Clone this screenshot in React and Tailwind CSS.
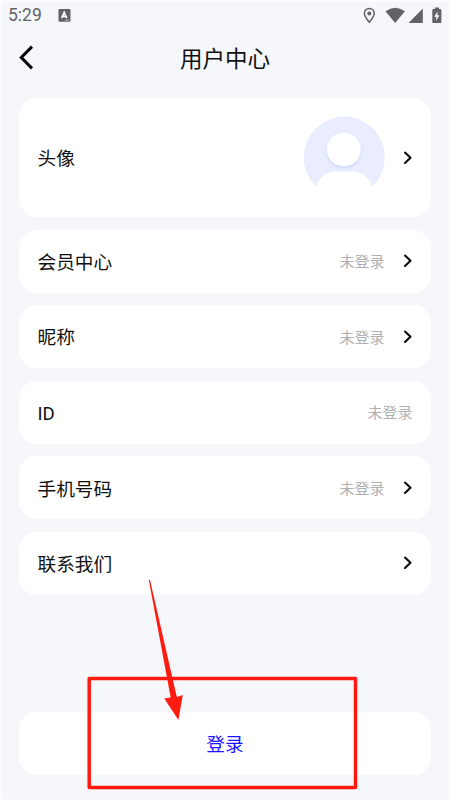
function Chevron() {
  return (
    <svg className="ml-[18px] h-[14px] w-[10px] shrink-0" viewBox="0 0 10 14" fill="none" stroke="#090909" strokeWidth="2.1" strokeLinecap="round" strokeLinejoin="round">
      <path d="M2 1.6 L7.5 6.8 L2 12" />
    </svg>
  );
}

function Avatar() {
  return (
    <svg className="-mt-[2px] h-[82px] w-[82px]" viewBox="0 0 82 82">
      <defs>
        <filter id="headShadow" x="-30%" y="-30%" width="160%" height="160%">
          <feDropShadow dx="0" dy="1.5" stdDeviation="1.6" floodColor="#c3cbfa" floodOpacity="0.8" />
        </filter>
      </defs>
      <circle cx="41.3" cy="41.2" r="40.6" fill="#e9edff" />
      <path d="M10 82 L13 71 C15 62 23 55.5 33 55.5 H49 C59 55.5 67 62 69 71 L72 82 Z" fill="#fff" />
      <circle cx="40.8" cy="33.4" r="17" fill="#fff" filter="url(#headShadow)" />
    </svg>
  );
}

function Row({ label, value, arrow = true }) {
  return (
    <div className="flex h-[63px] shrink-0 items-center rounded-[18px] bg-white pr-[18.5px] pl-[18.5px]">
      <span className="flex-1 pt-[4px] text-[18.67px] leading-none text-[#111]">{label}</span>
      {value && <span className="pt-[3px] text-[15px] leading-none text-[#b0b0b0]">{value}</span>}
      {arrow && <Chevron />}
    </div>
  );
}

function StatusBar() {
  return (
    <div className="flex h-[27px] items-center text-[#626366]">
      <span className="ml-[6px] w-[50px] pt-px text-[17.5px] leading-none">5:29</span>
      <svg className="h-[13px] w-[13px]" viewBox="0 0 13 13">
        <rect x="0.5" y="0" width="12" height="12.8" rx="1.2" fill="currentColor" />
        <path d="M3.6 9.2 L6.2 3.2 L8.8 9.2 M4.6 7.4 H7.8" fill="none" stroke="#fff" strokeWidth="1.6" />
        <path d="M7 11.2 H11" stroke="#c4c4c6" strokeWidth="0.8" />
      </svg>
      <div className="flex-1" />
      <svg className="h-[20px] w-[86px]" viewBox="362 5.5 86 20" fill="currentColor">
        <path d="M369.3 7.9 a4.9 4.9 0 0 1 4.9 4.9 C374.2 16 369.3 21.8 369.3 21.8 S364.4 16 364.4 12.8 A4.9 4.9 0 0 1 369.3 7.9 Z" fill="none" stroke="currentColor" strokeWidth="1.5" />
        <circle cx="369.3" cy="12.9" r="2" />
        <path d="M385.5 10.7 Q395.2 3.7 404.9 10.7 L395.2 22.5 Z" />
        <path d="M422.8 8 V22.4 H408.5 Z" />
        <path d="M434.8 7 H439 V8.5 H440.2 Q441.4 8.5 441.4 9.7 V21.4 Q441.4 22.6 440.2 22.6 H433.5 Q432.3 22.6 432.3 21.4 V9.7 Q432.3 8.5 433.5 8.5 H434.8 Z" />
        <path d="M437.8 10.7 L434.2 16.2 H436.4 L435.9 20.5 L439.4 14.7 H437.2 Z" fill="#fff" />
      </svg>
    </div>
  );
}

export default function App() {
  return (
    <div className="relative flex h-[800px] w-[450px] flex-col overflow-hidden border-x-2 border-t-2 border-b border-[#fbfcfe] bg-[#f5f7fb] font-['Roboto','Noto_Sans_CJK_SC',sans-serif]">
      <StatusBar />
      <header className="flex h-[67px] shrink-0 items-start">
        <svg className="mt-[14px] ml-[15px] h-[28px] w-[20px]" viewBox="0 0 20 28" fill="none" stroke="#050505" strokeWidth="3" strokeLinecap="butt">
          <path d="M15 3.6 L4.3 14.5 L15 25.4" />
        </svg>
        <h1 className="mt-[19px] ml-[143px] text-[22.5px] leading-none text-[#111]">用户中心</h1>
      </header>
      <main className="mt-[2px] flex flex-col gap-[12.6px] pr-[17px] pl-[17px]">
        <div className="flex h-[119px] shrink-0 items-center rounded-[18px] bg-white px-[18.5px]">
          <span className="flex-1 pt-[3px] text-[18.67px] leading-none text-[#111]">头像</span>
          <Avatar />
          <Chevron />
        </div>
        <Row label="会员中心" value="未登录" />
        <Row label="昵称" value="未登录" />
        <Row label="ID" value="未登录" arrow={false} />
        <Row label="手机号码" value="未登录" />
        <Row label="联系我们" />
      </main>
      <button className="mx-[17px] mt-auto mb-[24px] h-[63px] shrink-0 rounded-[18px] bg-white pt-[3px] text-[18.67px] leading-none text-[#1b16ff]">登录</button>
      <svg className="pointer-events-none absolute -top-[2px] -left-[2px] h-[800px] w-[450px]" viewBox="0 0 450 800">
        <rect x="89.2" y="678.5" width="266.3" height="109" fill="none" stroke="#ff1b10" strokeWidth="3.5" strokeLinejoin="round" />
        <path d="M148.8 580 L150 580 L176.8 697 L182.8 695 L178.4 720 L164.3 698.4 L170.7 697.5 Z" fill="#ff1b10" />
        <path d="M0 797 L2 800 H0 Z" fill="#444" />
      </svg>
    </div>
  );
}
